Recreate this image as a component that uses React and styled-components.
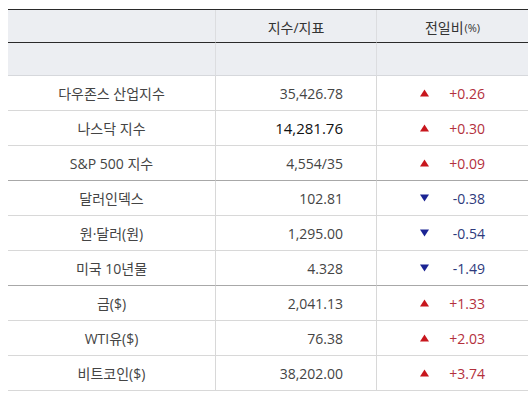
import React from "react";
import styled, { createGlobalStyle } from "styled-components";

const Global = createGlobalStyle`
  html, body { margin: 0; padding: 0; background: #fff; }
  body { font-family: "Open Sans", "Noto Sans CJK KR", sans-serif; }
`;

const Wrap = styled.div`
  padding: 9px 0 0 8px;
`;

const Table = styled.div`
  width: 520px;
  display: grid;
  grid-template-columns: 207px 161px 152px;
  border-top: 1px solid #2a2a2a;
`;

const HeadCell = styled.div`
  height: 33px;
  background: #eceef2;
  border-bottom: 1px solid ${(p) => (p.$strong ? "#2a2a2a" : "#d6d8dc")};
  border-left: ${(p) => (p.$first ? "none" : "1px solid #dcdde0")};
  display: flex;
  align-items: center;
  justify-content: center;
  font-size: 14px;
  color: #333;
  padding-top: ${(p) => (p.$strong ? "2px" : "0")};
  box-sizing: border-box;
`;

const Small = styled.span`
  font-size: 11px;
  margin-left: 1px;
`;

const Cell = styled.div`
  height: 35px;
  box-sizing: border-box;
  border-bottom: 1px solid ${(p) => (p.$group ? "#a8a8a8" : "#d8d8d8")};
  border-left: ${(p) => (p.$first ? "none" : "1px solid #d8d8d8")};
  display: flex;
  align-items: center;
  font-size: 14px;
`;

const NameCell = styled(Cell)`
  justify-content: center;
  color: #444;
`;

const ValueCell = styled(Cell)`
  justify-content: flex-end;
  padding-right: 33px;
  color: ${(p) => (p.$strong ? "#111" : "#444")};
  font-size: ${(p) => (p.$strong ? "15px" : "14px")};
`;

const ChangeCell = styled(Cell)`
  justify-content: center;
  gap: 20px;
`;

const ChangeText = styled.span`
  width: 36px;
  text-align: right;
  color: ${(p) => (p.$up ? "#b3303c" : "#2e3a7c")};
`;

const Tri = ({ up }) => (
  <svg width="9" height="8" viewBox="0 0 9 8">
    {up ? (
      <polygon points="4.5,0.5 9,7.5 0,7.5" fill="#c8161d" />
    ) : (
      <polygon points="0,0.5 9,0.5 4.5,7.5" fill="#1b2494" />
    )}
  </svg>
);

const rows = [
  { name: "다우존스 산업지수", value: "35,426.78", change: "+0.26", up: true },
  { name: "나스닥 지수", value: "14,281.76", change: "+0.30", up: true, strong: true },
  { name: "S&P 500 지수", value: "4,554/35", change: "+0.09", up: true, group: true },
  { name: "달러인덱스", value: "102.81", change: "-0.38", up: false },
  { name: "원·달러(원)", value: "1,295.00", change: "-0.54", up: false },
  { name: "미국 10년물", value: "4.328", change: "-1.49", up: false, group: true },
  { name: "금($)", value: "2,041.13", change: "+1.33", up: true },
  { name: "WTI유($)", value: "76.38", change: "+2.03", up: true },
  { name: "비트코인($)", value: "38,202.00", change: "+3.74", up: true },
];

export default function App() {
  return (
    <>
      <Global />
      <Wrap>
        <Table>
          <HeadCell $first $strong />
          <HeadCell $strong>지수/지표</HeadCell>
          <HeadCell $strong>
            전일비<Small>(%)</Small>
          </HeadCell>
          <HeadCell $first />
          <HeadCell />
          <HeadCell />
          {rows.map((r) => (
            <React.Fragment key={r.name}>
              <NameCell $first $group={r.group}>{r.name}</NameCell>
              <ValueCell $group={r.group} $strong={r.strong}>{r.value}</ValueCell>
              <ChangeCell $group={r.group}>
                <Tri up={r.up} />
                <ChangeText $up={r.up}>{r.change}</ChangeText>
              </ChangeCell>
            </React.Fragment>
          ))}
        </Table>
      </Wrap>
    </>
  );
}
